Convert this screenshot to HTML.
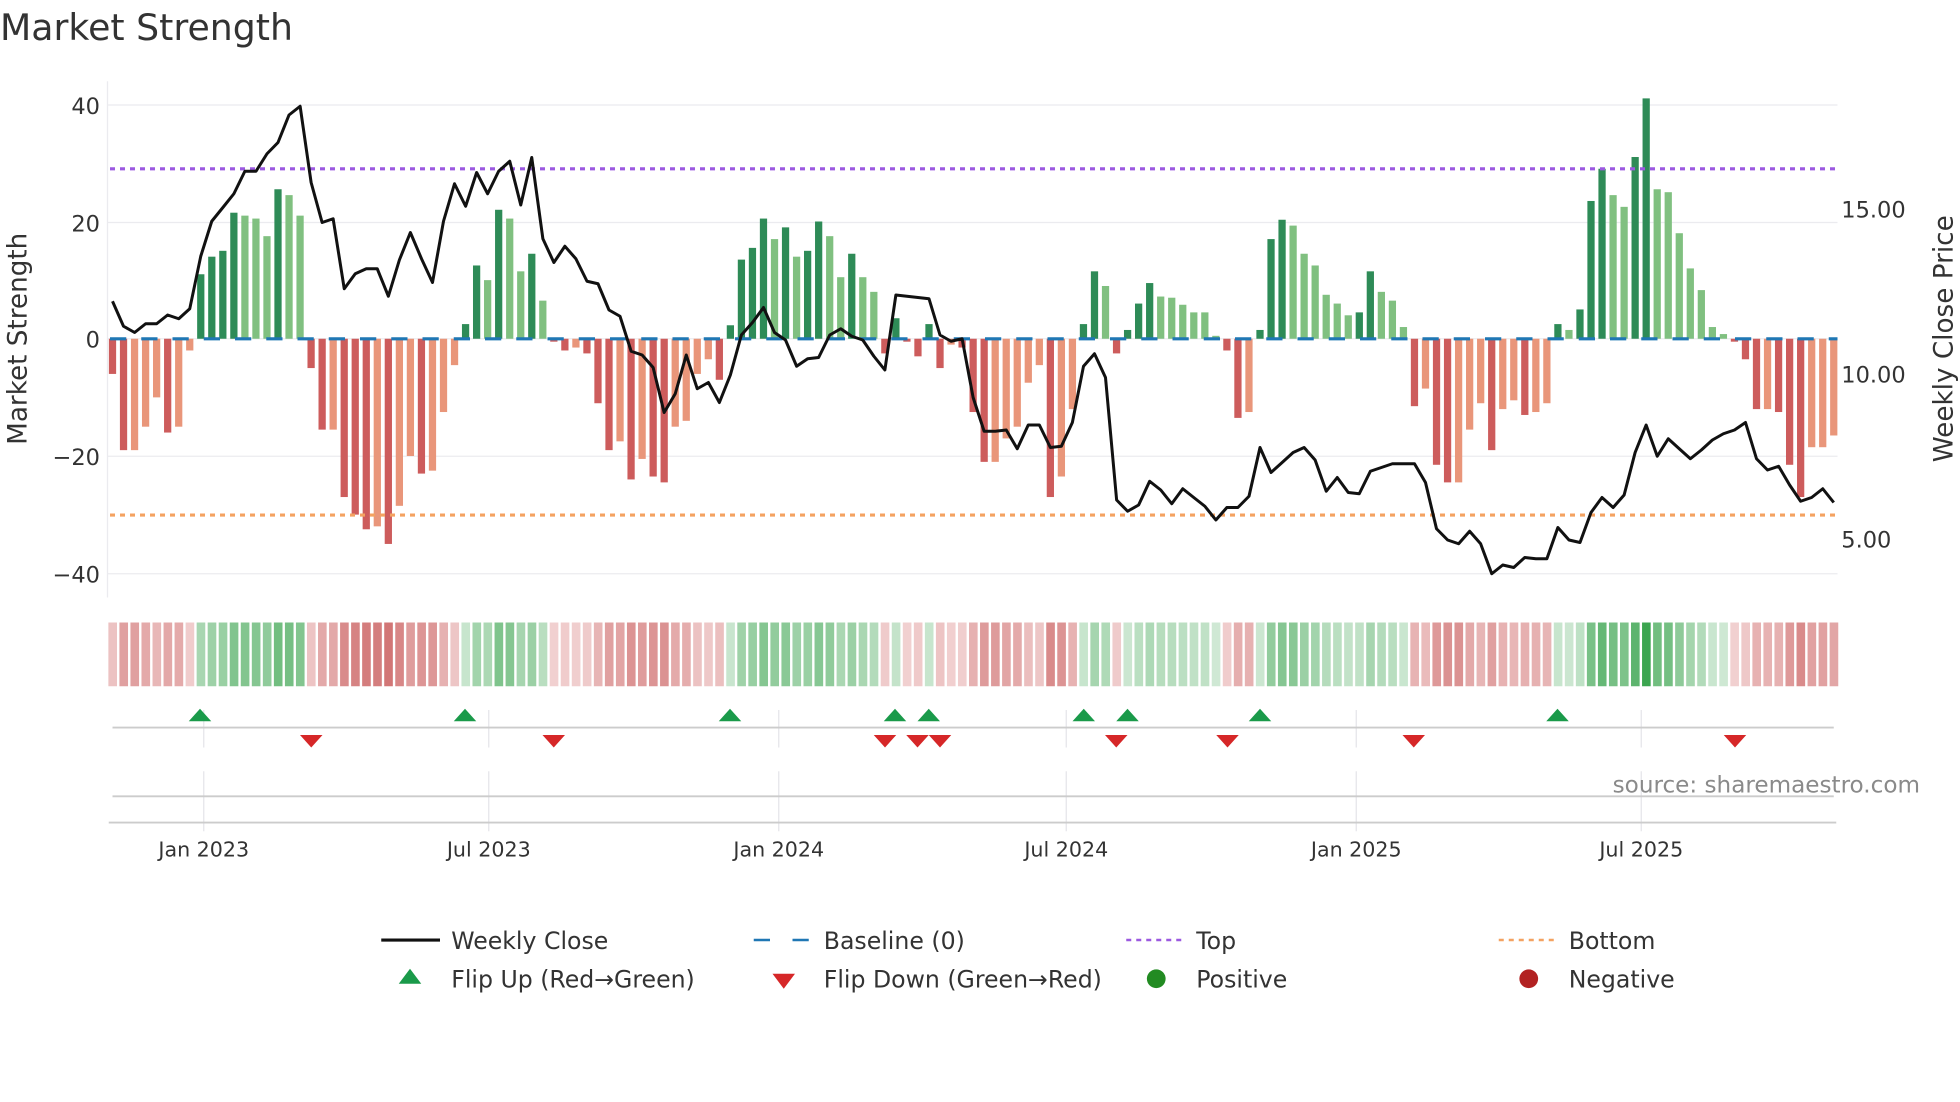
<!DOCTYPE html>
<html><head><meta charset="utf-8">
<style>
html,body{margin:0;padding:0;background:#fff;width:1960px;height:1102px;overflow:hidden}
svg{display:block}
text{font-family:"DejaVu Sans","Liberation Sans",sans-serif;fill:#333}
</style></head>
<body>
<svg id="c" width="1960" height="1102" viewBox="0 0 1568 881.6" xmlns="http://www.w3.org/2000/svg">
<rect width="1568" height="882" fill="#fff"/>
<text x="0" y="32" font-size="29">Market Strength</text>
<g id="grid" stroke="#ebebef" stroke-width="1">
<line x1="86" y1="84" x2="1470" y2="84"/><line x1="86" y1="178" x2="1470" y2="178"/>
<line x1="86" y1="271" x2="1470" y2="271"/><line x1="86" y1="365" x2="1470" y2="365"/>
<line x1="86" y1="459" x2="1470" y2="459"/>
<line x1="86" y1="65" x2="86" y2="478"/>
</g>
<g font-size="18" text-anchor="end">
<text x="80" y="91">40</text><text x="80" y="185">20</text><text x="80" y="278">0</text>
<text x="80" y="372">−20</text><text x="80" y="466">−40</text>
</g>
<g font-size="18">
<text x="1473" y="174">15.00</text><text x="1473" y="306">10.00</text><text x="1473" y="438">5.00</text>
</g>
<text transform="translate(21,271) rotate(-90)" font-size="21" text-anchor="middle">Market Strength</text>
<text transform="translate(1562,271) rotate(-90)" font-size="21" text-anchor="middle">Weekly Close Price</text>
<g id="bars"></g>
<line x1="88" y1="271" x2="1470" y2="271" stroke="#1f77b4" stroke-width="2.5" stroke-dasharray="13,12"/>
<line x1="88" y1="135" x2="1470" y2="135" stroke="#9b59e0" stroke-width="2.5" stroke-dasharray="4,4"/>
<line x1="88" y1="412" x2="1470" y2="412" stroke="#f4a261" stroke-width="2.5" stroke-dasharray="4,4"/>
<polyline id="price" fill="none" stroke="#111" stroke-width="2.4" stroke-linejoin="round"/>
<g id="heat"></g>
<g stroke="#e4e4ea" stroke-width="1">
<line x1="163" y1="568" x2="163" y2="598"/><line x1="391" y1="568" x2="391" y2="598"/>
<line x1="623" y1="568" x2="623" y2="598"/><line x1="853" y1="568" x2="853" y2="598"/>
<line x1="1085" y1="568" x2="1085" y2="598"/><line x1="1313" y1="568" x2="1313" y2="598"/>
<line x1="163" y1="617" x2="163" y2="665"/><line x1="391" y1="617" x2="391" y2="665"/>
<line x1="623" y1="617" x2="623" y2="665"/><line x1="853" y1="617" x2="853" y2="665"/>
<line x1="1085" y1="617" x2="1085" y2="665"/><line x1="1313" y1="617" x2="1313" y2="665"/>
</g>
<line x1="90" y1="582" x2="1467" y2="582" stroke="#ccc" stroke-width="1.5"/>
<line x1="90" y1="637" x2="1467" y2="637" stroke="#ccc" stroke-width="1.5"/>
<line x1="87" y1="658" x2="1469" y2="658" stroke="#ccc" stroke-width="1.5"/>
<g id="marks"></g>
<text x="1536" y="634" font-size="18.5" text-anchor="end" style="fill:#8a8a8a">source: sharemaestro.com</text>
<g font-size="16.5" text-anchor="middle">
<text x="163" y="685">Jan 2023</text><text x="391" y="685">Jul 2023</text>
<text x="623" y="685">Jan 2024</text><text x="853" y="685">Jul 2024</text>
<text x="1085" y="685">Jan 2025</text><text x="1313" y="685">Jul 2025</text>
</g>
<g font-size="18.9">
<line x1="305" y1="752" x2="352" y2="752" stroke="#111" stroke-width="2.5"/>
<text x="361" y="759">Weekly Close</text>
<line x1="603" y1="752" x2="647" y2="752" stroke="#1f77b4" stroke-width="2" stroke-dasharray="13,18"/>
<text x="659" y="759">Baseline (0)</text>
<line x1="901" y1="752" x2="945" y2="752" stroke="#9b59e0" stroke-width="2" stroke-dasharray="4,4"/>
<text x="957" y="759">Top</text>
<line x1="1199" y1="752" x2="1243" y2="752" stroke="#f4a261" stroke-width="2" stroke-dasharray="4,4"/>
<text x="1255" y="759">Bottom</text>
<polygon points="319,787 337,787 328,775" fill="#1a9a4a"/>
<text x="361" y="790">Flip Up (Red→Green)</text>
<polygon points="618,779 636,779 627,791" fill="#d62728"/>
<text x="659" y="790">Flip Down (Green→Red)</text>
<circle cx="925" cy="783" r="7.5" fill="#228b22"/>
<text x="957" y="790">Positive</text>
<circle cx="1223" cy="783" r="7.5" fill="#b22222"/>
<text x="1255" y="790">Negative</text>
</g>
</svg>
<script>
var V=[-6,-19,-19,-15,-10,-16,-15,-2,11,14,15,21.5,21,20.5,17.5,25.5,24.5,21,-5,-15.5,-15.5,-27,-30,-32.5,-32,-35,-28.5,-20,-23,-22.5,-12.5,-4.5,2.5,12.5,10,22,20.5,11.5,14.5,6.5,-0.5,-2,-1.5,-2.5,-11,-19,-17.5,-24,-20.5,-23.5,-24.5,-15,-14,-6,-3.5,-7,2.3,13.5,15.5,20.5,17,19,14,15,20,17.5,10.5,14.5,10.5,8,-2.5,3.5,-0.5,-3,2.5,-5,-1,-1.5,-12.5,-21,-21,-17,-15,-7.5,-4.5,-27,-23.5,-12,2.5,11.5,9,-2.5,1.5,6,9.5,7.2,7,5.8,4.5,4.5,0.5,-2,-13.5,-12.5,1.5,17,20.3,19.3,14.5,12.5,7.5,6,4,4.5,11.5,8,6.5,2,-11.5,-8.5,-21.5,-24.5,-24.5,-15.5,-11,-19,-12,-10.5,-13,-12.5,-11,2.5,1.5,5,23.5,29,24.5,22.5,31,41,25.5,25,18,12,8.3,2,0.8,-0.5,-3.5,-12,-12,-12.5,-21.5,-27,-18.5,-18.5,-16.5];
var P=[241,261,266,259,259,252,255,247,205,177,166,155,137,137,123,114,92,85,146,178,175,231,219,215,215,237,208,186,207,226,177,147,165,138,155,137,129,164,126,191,210,197,207,225,227,248,253,281,284,294,330,315,284,311,306,322,300,268,258,246,266,272,293,287,286,268,263,269,272,285,296,236,237,238,239,268,273,271,318,345,345,344,359,340,340,358,357,338,293,283,302,400,409,404,385,392,403,391,398,405,416,406,406,397,358,378,370,362,358,368,393,382,394,395,377,374,371,371,371,386,423,432,435,425,435,459,452,454,446,447,447,422,432,434,410,398,406,396,362,340,365,351,359,367,360,352,347,344,338,367,376,373,388,401,398,391,402];
var NS="http://www.w3.org/2000/svg",step=(1467-90)/156;
function el(t,a,p){var e=document.createElementNS(NS,t);for(var k in a)e.setAttribute(k,a[k]);p.appendChild(e);return e;}
var bars=document.getElementById('bars'),heat=document.getElementById('heat');
for(var i=0;i<V.length;i++){var v=V[i],x=90+step*i,pv=i?V[i-1]:0,h=Math.abs(v)*4.69,c;
 if(v>=0)c=(v>pv)?'#2e8b57':'#80c080';else c=(v<pv)?'#cd5c5c':'#e9967a';
 el('rect',{x:x-2.9,y:v>=0?271-h:271,width:5.8,height:Math.max(h,0.5),fill:c},bars);
 var t=Math.min(1,0.15+Math.abs(v)/40*0.85),hc;
 if(v>=0){hc='rgb('+Math.round(235-(235-60)*t)+','+Math.round(245-(245-165)*t)+','+Math.round(237-(237-80)*t)+')';}
 else{hc='rgb('+Math.round(248-(248-205)*t)+','+Math.round(228-(228-105)*t)+','+Math.round(228-(228-105)*t)+')';}
 el('rect',{x:x-3.3,y:498,width:6.9,height:51,fill:hc},heat);}
var pts=[];for(var j=0;j<P.length;j++)pts.push((90+step*j).toFixed(1)+','+P[j]);
document.getElementById('price').setAttribute('points',pts.join(' '));
var m=document.getElementById('marks');
[160,372,584,716,743,867,902,1008,1246].forEach(function(x){el('polygon',{points:(x-9)+',577 '+(x+9)+',577 '+x+',567',fill:'#1a9a4a'},m);});
[249,443,708,734,752,893,982,1131,1388].forEach(function(x){el('polygon',{points:(x-9)+',588 '+(x+9)+',588 '+x+',598',fill:'#d62728'},m);});
</script>
</body></html>
